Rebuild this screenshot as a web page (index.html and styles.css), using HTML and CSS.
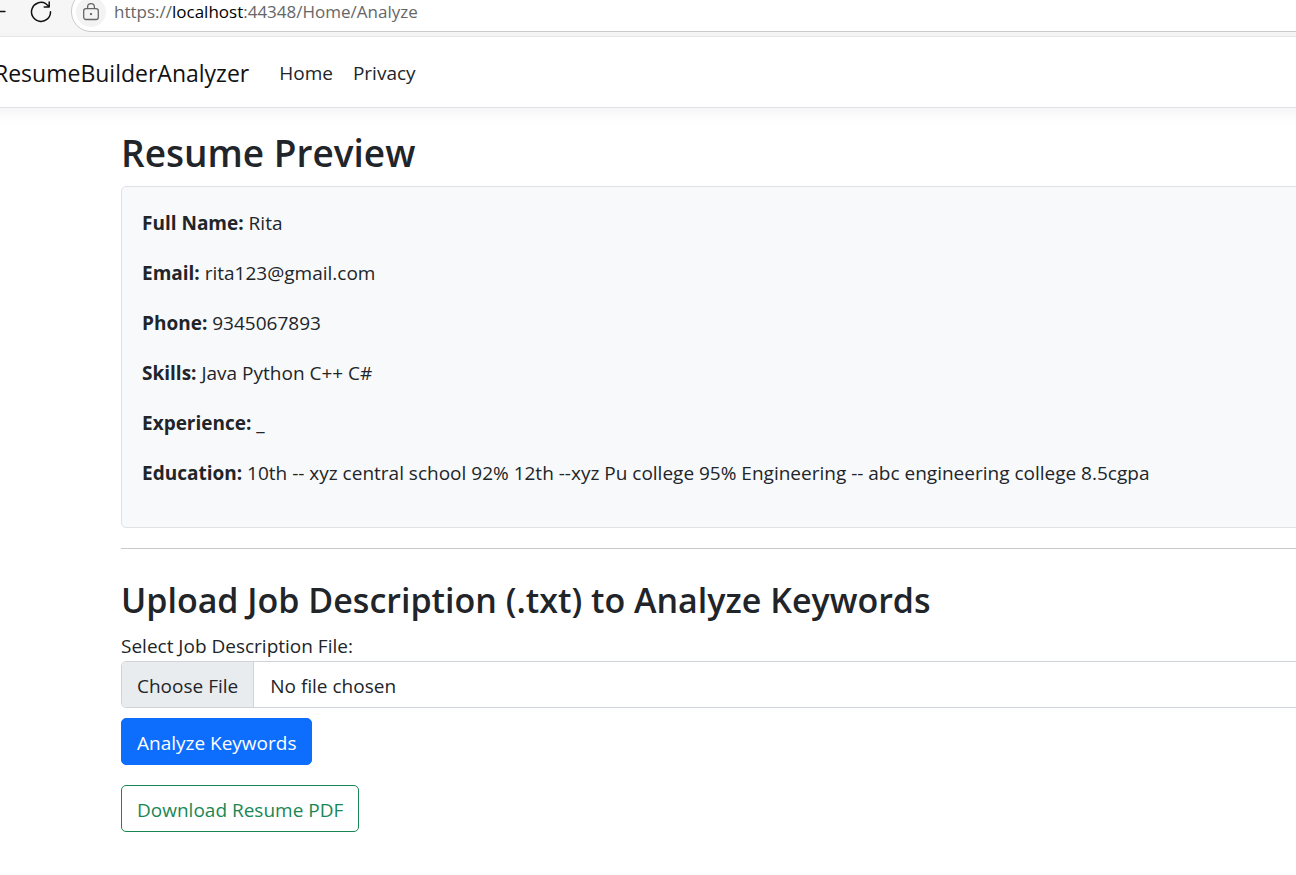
FILE: index.html
```html
<!DOCTYPE html>
<html lang="en">
<head>
<meta charset="utf-8">
<meta name="viewport" content="width=device-width, initial-scale=1">
<title>Analyze - ResumeBuilderAnalyzer</title>
<link rel="stylesheet" href="styles.css">
</head>
<body>
<div class="toolbar">
  <button class="tool-button back" type="button" aria-label="Back">
    <svg width="20" height="22" viewBox="0 0 20 22" fill="none" stroke="#111" stroke-width="1.4" stroke-linecap="round" stroke-linejoin="round"><path d="M19 10.5H1M9 2.5l-8 8 8 8"/></svg>
  </button>
  <button class="tool-button reload" type="button" aria-label="Reload">
    <svg width="22" height="22" viewBox="0 0 22 22" fill="none" stroke="#111" stroke-width="1.5" stroke-linecap="round" stroke-linejoin="round"><path d="M20.5 10.8A9.5 9.5 0 1 1 15.8 2.7L19 5.5M19.2 1v4.9h-5"/></svg>
  </button>
  <div class="address">
    <button class="lock" type="button" aria-label="Site information">
      <svg width="18" height="20" viewBox="0 0 18 20" fill="none" stroke="#666" stroke-width="1.3" stroke-linecap="round"><rect x="1.7" y="6.7" width="14.6" height="10.8" rx="2.2"/><path d="M5.6 6.5V5a3.4 3.4 0 0 1 6.8 0v1.5"/><circle cx="9" cy="12.1" r="1.1" fill="#555" stroke="none"/></svg>
    </button>
    <span class="url">https://<span class="host">localhost</span>:44348/Home/Analyze</span>
  </div>
</div>
<header class="navbar">
  <a class="brand" href="#">ResumeBuilderAnalyzer</a>
  <nav class="links">
    <a href="#">Home</a>
    <a href="#">Privacy</a>
  </nav>
</header>
<main class="content">
  <h1 class="title">Resume Preview</h1>
  <section class="preview">
    <p><strong>Full Name:</strong> Rita</p>
    <p><strong>Email:</strong> rita123@gmail.com</p>
    <p><strong>Phone:</strong> 9345067893</p>
    <p><strong>Skills:</strong> Java Python C++ C#</p>
    <p><strong>Experience:</strong> _</p>
    <p><strong>Education:</strong> 10th -- xyz central school 92% 12th --xyz Pu college 95% Engineering -- abc engineering college 8.5cgpa</p>
  </section>
  <hr class="rule">
  <h2 class="subtitle">Upload Job Description (.txt) to Analyze Keywords</h2>
  <form class="upload">
    <label for="job-file">Select Job Description File:</label>
    <input class="file" id="job-file" type="file" accept=".txt">
    <button class="btn primary" type="button">Analyze Keywords</button>
  </form>
  <a class="btn outline" href="#">Download Resume PDF</a>
</main>
</body>
</html>
```
FILE: styles.css
```css
* {
  box-sizing: border-box;
}

body {
  margin: 0;
  overflow-x: hidden;
  background: #fff;
  color: #212529;
  font-family: "Open Sans", "Noto Sans", sans-serif;
  font-size: 19px;
  line-height: 30px;
}

.toolbar {
  display: flex;
  height: 37px;
  overflow: hidden;
  background: #f6f6f6;
  border-bottom: 1px solid #e8e8e8;
}

.tool-button,
.lock {
  display: flex;
  flex: none;
  padding: 0;
  border: 0;
  background: none;
}

.tool-button {
  margin-top: 1px;
}

.back {
  margin-left: -14px;
}

.reload {
  margin: 1px 19px 0 24px;
}

.address {
  display: flex;
  flex: 1;
  align-items: center;
  gap: 8px;
  height: 41px;
  margin: -9px -40px 0 0;
  padding-left: 4px;
  border: 1px solid #cacaca;
  border-radius: 20px;
  background: #fff;
}

.lock {
  align-items: center;
  justify-content: center;
  width: 30px;
  height: 30px;
  border-radius: 50%;
  background: #f3f3f3;
}

.url {
  color: #666;
  font-size: 17px;
}

.host {
  color: #000;
}

.navbar {
  display: flex;
  align-items: center;
  gap: 30px;
  height: 71px;
  margin: 0 -20px;
  padding: 1px 20px 0;
  border-bottom: 1px solid #dee2e6;
  box-shadow: 0 5px 15px rgba(0, 0, 0, 0.05);
}

.navbar a {
  color: #212529;
  text-decoration: none;
}

.navbar .brand {
  margin-left: -6px;
  color: #111;
  font-size: 23px;
}

.links {
  display: flex;
  gap: 20px;
}

.content {
  padding: 21px 0 40px 121px;
}

.title,
.subtitle {
  margin: 0 0 9px;
  font-weight: 600;
}

.title {
  font-size: 37px;
  line-height: 48px;
}

.subtitle {
  font-size: 34px;
  line-height: 43px;
}

.preview {
  margin-right: -8px;
  padding: 21px 20px 19px;
  border: 1px solid #dee2e6;
  border-radius: 5px;
  background: #f8f9fb;
}

.preview p {
  margin: 0 0 20px;
}

.rule {
  margin: 20px 0 30px;
  border: 0;
  border-top: 1px solid #c8c9ca;
}

.upload {
  display: flex;
  flex-direction: column;
  align-items: flex-start;
  margin-bottom: 20px;
}

.file {
  align-self: stretch;
  height: 47px;
  margin: 0 -8px 10px 0;
  border: 1px solid #ced4da;
  border-radius: 5px;
  color: #212529;
  font: inherit;
  line-height: 30px;
}

.file::file-selector-button {
  height: 45px;
  margin: 0 16px 0 0;
  padding: 2px 15px 0;
  border: 0;
  border-right: 1px solid #ced4da;
  border-radius: 4px 0 0 4px;
  background: #e9ecef;
  color: #212529;
  font: inherit;
}

.btn {
  display: inline-block;
  padding: 9px 15px 6px;
  border: 1px solid;
  border-radius: 5px;
  font: inherit;
  text-decoration: none;
}

.primary {
  border-color: #0d6efd;
  background: #0d6efd;
  color: #fff;
}

.outline {
  border-color: #198754;
  color: #198754;
}
```
